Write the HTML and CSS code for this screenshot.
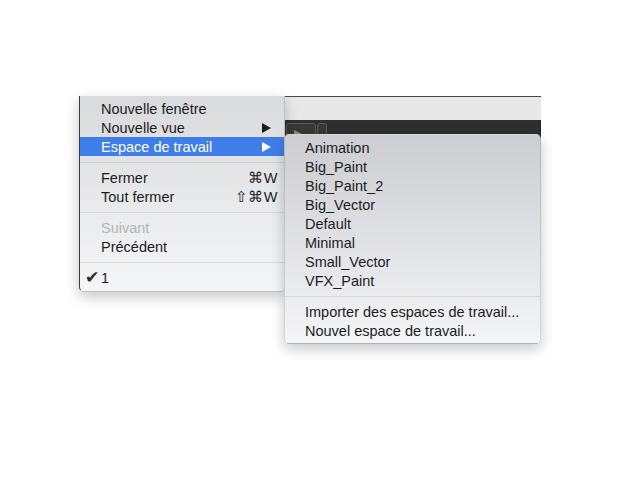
FILE: index.html
```html
<!DOCTYPE html>
<html lang="fr">
  <head>
    <meta charset="UTF-8" />
    <meta name="viewport" content="width=device-width, initial-scale=1.0" />
    <title>Fenêtre</title>
    <link rel="stylesheet" href="styles.css">
  </head>
  <body>
    <div class="scene">
      <div class="app">
        <div class="app-title"></div>
        <div class="app-toolbar">
          <span class="tool-btn wide"><span class="play"></span></span>
          <span class="tool-btn"></span>
        </div>
      </div>

      <div class="menu main-menu">
        <div class="item"><span class="label">Nouvelle fenêtre</span></div>
        <div class="item"><span class="label">Nouvelle vue</span><span class="arrow"></span></div>
        <div class="item active"><span class="label">Espace de travail</span><span class="arrow"></span></div>
        <div class="sep"></div>
        <div class="item"><span class="label">Fermer</span><span class="key">⌘W</span></div>
        <div class="item"><span class="label">Tout fermer</span><span class="key">⇧⌘W</span></div>
        <div class="sep"></div>
        <div class="item disabled"><span class="label">Suivant</span></div>
        <div class="item"><span class="label">Précédent</span></div>
        <div class="sep"></div>
        <div class="item"><span class="check">✔</span><span class="label">1</span></div>
      </div>

      <div class="menu sub-menu">
        <div class="item"><span class="label">Animation</span></div>
        <div class="item"><span class="label">Big_Paint</span></div>
        <div class="item"><span class="label">Big_Paint_2</span></div>
        <div class="item"><span class="label">Big_Vector</span></div>
        <div class="item"><span class="label">Default</span></div>
        <div class="item"><span class="label">Minimal</span></div>
        <div class="item"><span class="label">Small_Vector</span></div>
        <div class="item"><span class="label">VFX_Paint</span></div>
        <div class="sep"></div>
        <div class="item"><span class="label">Importer des espaces de travail...</span></div>
        <div class="item"><span class="label">Nouvel espace de travail...</span></div>
      </div>
    </div>
  </body>
</html>
```

FILE: styles.css
```css
body {
  margin: 0;
  padding: 0;
  background-color: #ffffff;
  font-family: "Liberation Sans", Arial, sans-serif;
  font-size: 14.5px;
  color: #1c1c1c;
}

.scene {
  position: relative;
  width: 620px;
  height: 500px;
  padding: 96px 0 0 79px;
  box-sizing: border-box;
}

/* application window behind the menus */
.app {
  width: 462px;
  border-top: 1px solid #4a4a4a;
}

.app-title {
  height: 23px;
  background-color: #e8e8e8;
}

.app-toolbar {
  height: 80px;
  background-color: #2e2e2e;
  border-right: 1px solid #222;
  display: flex;
  gap: 1px;
  padding: 3px 0 0 207px;
  box-sizing: border-box;
}

.tool-btn {
  width: 8px;
  height: 16px;
  background-color: #383838;
  border: 1px solid #5a5a5a;
  border-radius: 3px;
}

.tool-btn.wide {
  width: 28px;
  position: relative;
}

.play {
  position: absolute;
  left: 7px;
  top: 6px;
  border-left: 8px solid #8a8a8a;
  border-top: 4px solid transparent;
  border-bottom: 4px solid transparent;
}

/* menus */
.menu {
  position: absolute;
  box-sizing: border-box;
  border: 1px solid rgba(0, 0, 0, 0.12);
  border-radius: 0 0 5px 5px;
  box-shadow: 0 5px 14px rgba(0, 0, 0, 0.22);
}

.main-menu {
  left: 79px;
  top: 96px;
  width: 206px;
  padding: 3px 0 4px;
  background: linear-gradient(#d9dadc, #f5f6f8);
  border-top: none;
  border-left-color: #3a3a3a;
}

.sub-menu {
  left: 284px;
  top: 134px;
  width: 257px;
  padding: 3px 0 3px;
  border-radius: 5px;
  background: linear-gradient(#cbcdd1, #f4f5f7);
}

.item {
  display: flex;
  align-items: center;
  height: 19px;
  padding: 0 6px 0 21px;
  white-space: nowrap;
}

.sub-menu .item {
  padding-left: 20px;
}

.item .label {
  flex: 1;
}

.item.active {
  background-color: #3f7ee8;
  color: #ffffff;
}

.item.disabled {
  color: #b3b4b6;
}

.key {
  letter-spacing: 0.5px;
}

.arrow {
  margin-right: 7px;
  border-left: 9px solid #1c1c1c;
  border-top: 5px solid transparent;
  border-bottom: 5px solid transparent;
}

.item.active .arrow {
  border-left-color: #ffffff;
}

.check {
  width: 16px;
  margin-left: -16px;
  font-family: "DejaVu Sans", sans-serif;
  font-size: 17px;
  line-height: 1;
  color: #2a2a2a;
}

.sep {
  height: 12px;
  display: flex;
  align-items: center;
}

.sep::before {
  content: "";
  flex: 1;
  height: 1px;
  background-color: rgba(0, 0, 0, 0.09);
}
```
